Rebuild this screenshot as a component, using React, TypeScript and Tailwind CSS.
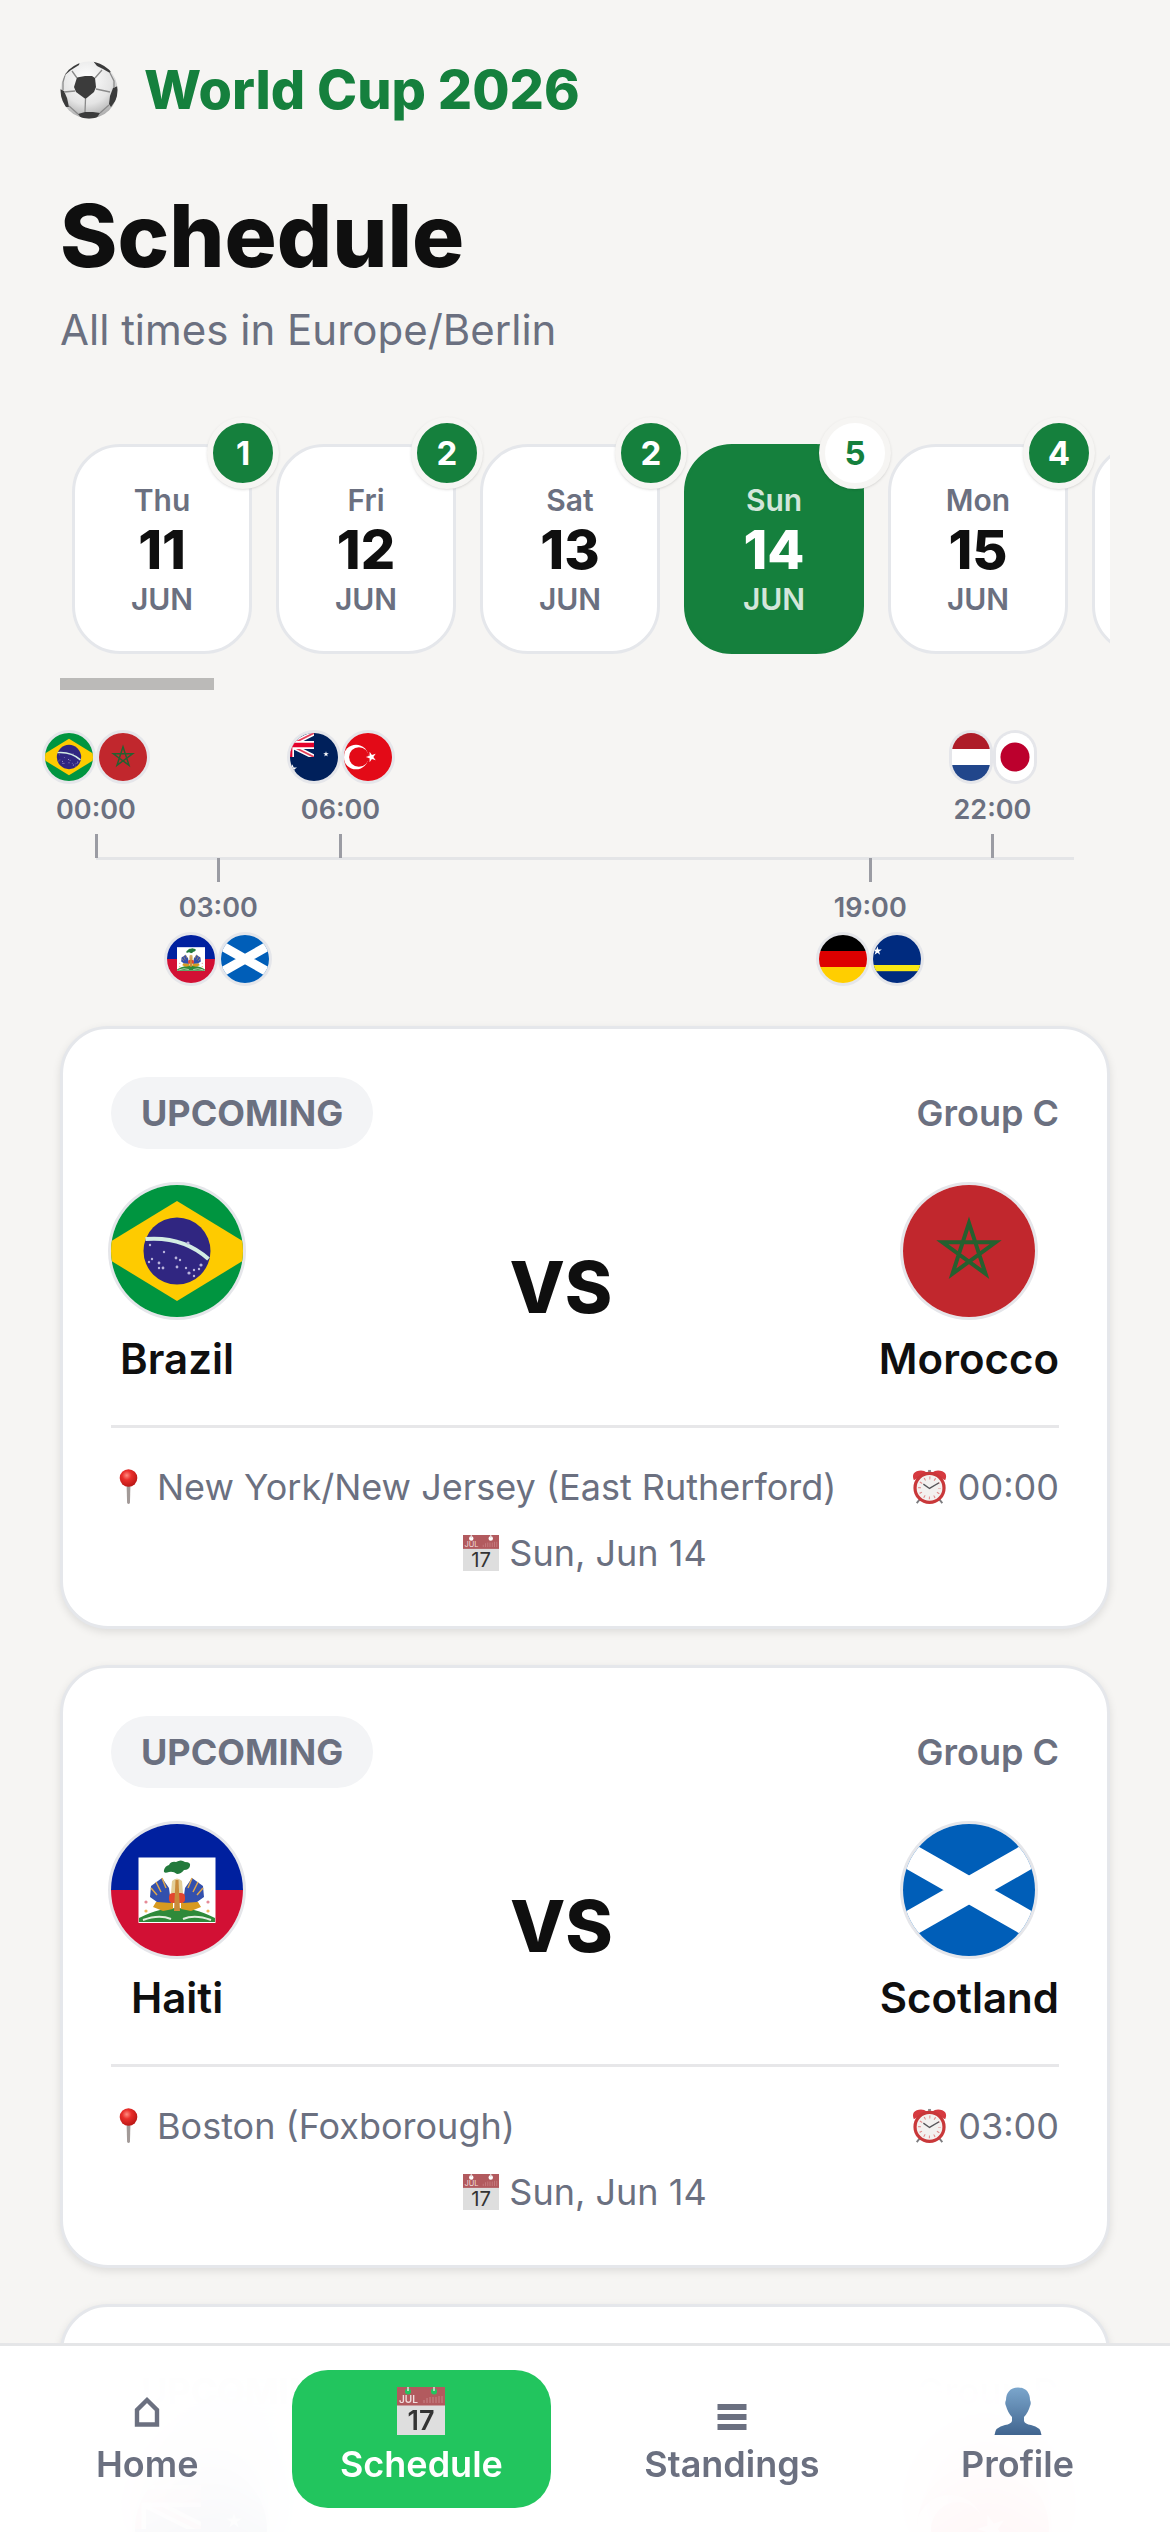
import type { ReactNode } from "react";

type Team =
  | "Brazil"
  | "Morocco"
  | "Haiti"
  | "Scotland"
  | "Australia"
  | "Türkiye"
  | "Germany"
  | "Curaçao"
  | "Netherlands"
  | "Japan";

const STAR =
  "M0-1 .2245-.309 .9511-.309 .3633.118 .5878.809 0 .382-.5878.809-.3633.118-.9511-.309-.2245-.309Z";

function Star({ x, y, r }: { x: number; y: number; r: number }) {
  return <path d={STAR} fill="#fff" transform={`translate(${x} ${y}) scale(${r})`} />;
}

function Stripes({ colors }: { colors: [string, string, string] }) {
  return (
    <>
      {colors.map((c, i) => (
        <rect key={i} x="-66" y={-66 + i * 44} width="132" height="44" fill={c} />
      ))}
    </>
  );
}

/* Flag art is drawn on a 132-unit square centred on the origin. */
const FLAGS: Record<Team, ReactNode> = {
  Brazil: (
    <>
      <rect x="-66" y="-66" width="132" height="132" fill="#009540" />
      <path d="M-82 0 0-50 82 0 0 50Z" fill="#fecb00" />
      <circle r="33.5" fill="#302681" />
      <path d="M-31.5-12Q6-15 31.5 8" fill="none" stroke="#d3ece4" strokeWidth="4" />
      <g fill="#b9b4dc">
        <circle cx="-27" cy="-6" r="1.2" />
        <circle cx="-13" cy="1" r="1.2" />
        <circle cx="-28" cy="11" r="1.2" />
        <circle cx="-25" cy="8" r="1.2" />
        <circle cx="-18" cy="12" r="1.4" />
        <circle cx="-14" cy="17" r="1.4" />
        <circle cx="-18" cy="17" r="1.2" />
        <circle cx="-1" cy="7" r="1.4" />
        <circle cx="3" cy="9" r="1.2" />
        <circle cx="0" cy="16" r="1.4" />
        <circle cx="9" cy="17" r="1.2" />
        <circle cx="12" cy="22" r="1.6" />
        <circle cx="17" cy="19" r="1.2" />
        <circle cx="17" cy="25" r="1.2" />
        <circle cx="24" cy="14" r="1.6" />
        <circle cx="22" cy="18" r="1.2" />
        <circle cx="11" cy="-8" r="1.6" />
      </g>
    </>
  ),
  Morocco: (
    <>
      <rect x="-66" y="-66" width="132" height="132" fill="#c1272d" />
      <path
        d="M0-28 16.5 22.7-26.6-8.7H26.6L-16.5 22.7Z"
        fill="none"
        stroke="#25602f"
        strokeWidth="4"
      />
    </>
  ),
  Haiti: (
    <>
      <rect x="-66" y="-66" width="132" height="66" fill="#00209f" />
      <rect x="-66" width="132" height="66" fill="#d21034" />
      <rect x="-38.5" y="-32.5" width="77" height="65.5" fill="#fff" />
      <path d="M-38 32V28Q-26 22-17 20 0 16 17 20 26 22 38 28V32Z" fill="#2f8a3a" />
      <path d="M-34 30Q-18 24-6 29M34 30Q18 24 6 29" fill="none" stroke="#e4efe0" strokeWidth="2" />
      <path d="M-21 12-24 17-14 21-4 19V12ZM21 12 24 17 14 21 4 19V12Z" fill="#d79a20" />
      <path
        d="M-15-12-26-4-27 7-20 12-6 13-8-2ZM15-12 26-4 27 7 20 12 6 13 8-2Z"
        fill="#3350ad"
      />
      <path
        d="M-15-12-11-2M-21-8-16 2M-26-2-20 5M15-12 11-2M21-8 16 2M26-2 20 5"
        stroke="#e0a74c"
        strokeWidth="1.5"
        fill="none"
      />
      <path d="M-5-9Q0-14 5-9L6 3H-6Z" fill="#e3cf9a" />
      <rect x="-8" y="3" width="16" height="10" rx="4" fill="#e2452f" />
      <path d="M-1.5-10H1.5L3 21H-3Z" fill="#c98b3a" />
      <path
        d="M0-16Q-4-19-8-18-14-16-13-20-12-24-8-25-6-29-1-28 4-31 8-28 14-28 13-24 12-20 7-20 4-16 0-16Z"
        fill="#237a3c"
      />
      <circle cx="-31" cy="12" r="1.6" fill="#e58a97" />
      <circle cx="31" cy="12" r="1.6" fill="#e58a97" />
      <circle cx="-31" cy="21" r="1.6" fill="#f0b458" />
      <circle cx="31" cy="21" r="1.6" fill="#f0b458" />
    </>
  ),
  Scotland: (
    <>
      <rect x="-66" y="-66" width="132" height="132" fill="#005eb8" />
      <path d="M-100-57 100 57M-100 57 100-57" stroke="#fff" strokeWidth="25.5" />
    </>
  ),
  Australia: (
    <>
      <rect x="-66" y="-66" width="132" height="132" fill="#00205b" />
      <svg x="-132" y="-66" width="132" height="66" viewBox="0 0 132 66">
        <path d="M0 0 132 66M132 0 0 66" stroke="#fff" strokeWidth="13" />
        <path d="M0 0 132 66M132 0 0 66" stroke="#e4405a" strokeWidth="5" />
        <path d="M66 0V66M0 33H132" stroke="#fff" strokeWidth="22" />
        <path d="M66 0V66M0 33H132" stroke="#e4002b" strokeWidth="13" />
      </svg>
      <Star x={33} y={-8} r={8} />
      <Star x={-59} y={33} r={13} />
    </>
  ),
  Türkiye: (
    <>
      <rect x="-66" y="-66" width="132" height="132" fill="#e30a17" />
      <circle cx="-33" r="34" fill="#fff" />
      <circle cx="-25" r="27" fill="#e30a17" />
      <g transform="rotate(-90 9 0)">
        <Star x={9} y={0} r={15} />
      </g>
    </>
  ),
  Germany: <Stripes colors={["#000000", "#dd0000", "#ffce00"]} />,
  Netherlands: <Stripes colors={["#ae1c28", "#ffffff", "#21468b"]} />,
  Japan: (
    <>
      <rect x="-66" y="-66" width="132" height="132" fill="#fff" />
      <circle r="40" fill="#bc002d" />
    </>
  ),
  Curaçao: (
    <>
      <rect x="-66" y="-66" width="132" height="132" fill="#002b7f" />
      <rect x="-66" y="16.5" width="132" height="17" fill="#f9e814" />
      <Star x={-54} y={-22} r={13} />
    </>
  ),
};

function Flag({ team, className }: { team: Team; className: string }) {
  return (
    <svg
      role="img"
      aria-label={`${team} flag`}
      viewBox="-66 -66 132 132"
      preserveAspectRatio="xMidYMid slice"
      className={`shrink-0 rounded-full ring-3 ring-[#e5e6ea] ${className}`}
    >
      {FLAGS[team]}
    </svg>
  );
}

function SoccerBall() {
  return (
    <svg viewBox="0 0 58 58" className="size-[58px]" aria-hidden="true">
      <defs>
        <radialGradient id="ball" cx=".45" cy=".3" r=".75">
          <stop offset="0" stopColor="#ffffff" />
          <stop offset=".6" stopColor="#e4e4e4" />
          <stop offset="1" stopColor="#a2a2a2" />
        </radialGradient>
        <clipPath id="ballClip">
          <circle cx="29" cy="29" r="28.5" />
        </clipPath>
      </defs>
      <circle cx="29" cy="29" r="28.5" fill="url(#ball)" />
      <g clipPath="url(#ballClip)">
        <g fill="#3b3b3b">
          <path d="M17 16.5 25 15H32L35 17 36 26 34 31 25.5 38 16 31 14 26Z" />
          <path d="M33 0 41 1 51 10 50 12 43 8 37 5Z" />
          <path d="M20 0 19 4 11 9 5 14 3 12 10 3Z" />
          <path d="M0 28 4 30 7 37 9 46 5 46-1 36Z" />
          <path d="M58 25 53 27 50 35 49 43 51 46 58 36Z" />
          <path d="M18 53 25 51 33 51 40 52 36 58H22Z" />
        </g>
        <g fill="none" stroke="#8a8a8a" strokeWidth="1.3">
          <path d="M17 17 12 10M35 17 42 9M36 28 50 31M25.5 38 25 51M15 30 4 31M9 45 18 53M40 52 49 44M50 12 54 20 54 27M5 14 3 21 3 29" />
        </g>
      </g>
    </svg>
  );
}

function Pin() {
  return (
    <svg viewBox="0 0 38 38" className="size-9 shrink-0" aria-hidden="true">
      <defs>
        <radialGradient id="pin" cx=".4" cy=".35" r=".65">
          <stop offset="0" stopColor="#ff8c80" />
          <stop offset=".4" stopColor="#ea2f2b" />
          <stop offset="1" stopColor="#bb1715" />
        </radialGradient>
      </defs>
      <path d="M16.5 18H20.5L20 36Q18.5 38 17 36Z" fill="#a29a98" />
      <circle cx="18.5" cy="9.5" r="9.3" fill="url(#pin)" />
    </svg>
  );
}

function Clock() {
  return (
    <svg viewBox="0 0 38 38" className="size-9 shrink-0" aria-hidden="true">
      <path d="M9 31 5 36M28 31 32 36" stroke="#7d7d80" strokeWidth="2" />
      <path d="M2 12Q-1 5 5 2.500 11 0 16 4ZM35 12Q38 5 32 2.500 26 0 21 4Z" fill="#d63a40" />
      <rect x="17" y="1" width="3" height="4" fill="#8b8b8e" />
      <circle cx="18.5" cy="20" r="15.3" fill="#f3f1ef" stroke="#c9383a" strokeWidth="3.4" />
      <circle
        cx="18.5"
        cy="20"
        r="10.5"
        fill="none"
        stroke="#e08a8a"
        strokeWidth="3"
        strokeDasharray="1.1 4.398"
        strokeDashoffset=".5"
      />
      <path d="M12 16 18.5 20.5 28.5 14.5" fill="none" stroke="#55565a" strokeWidth="1.4" />
    </svg>
  );
}

function Calendar({ className }: { className: string }) {
  return (
    <svg viewBox="0 0 48 48" className={`shrink-0 ${className}`} aria-hidden="true">
      <path
        fillRule="evenodd"
        d="M0 0H48V19H0ZM11 1.500A3 3 0 1 0 11 7.500 3 3 0 1 0 11 1.500ZM37 1.500A3 3 0 1 0 37 7.500 3 3 0 1 0 37 1.500Z"
        fill="#b25a5e"
      />
      <rect y="18.500" width="48" height="29.500" fill="#dedede" />
      <path d="M27 13V16M30 11V16M33 10V16M36 10V16M39 10V16M42 9V16M45 9V16" stroke="#c88387" />
      <path d="M11 4V0M37 4V0" stroke="#e6dcdc" strokeWidth="1.5" />
      <text x="2" y="16" fontSize="10" fill="#f0dcdc" fontFamily="Inter, sans-serif">
        JUL
      </text>
      <text x="24" y="43" fontSize="27" textAnchor="middle" fill="#333" fontFamily="Inter, sans-serif">
        17
      </text>
    </svg>
  );
}

function HomeIcon() {
  return (
    <svg viewBox="0 0 48 48" className="size-12" aria-hidden="true">
      <path d="M14 37.500V23L24 13 34 23V37.500Z" fill="none" stroke="currentColor" strokeWidth="4.4" />
    </svg>
  );
}

function StandingsIcon() {
  return (
    <svg viewBox="0 0 48 48" className="size-12" aria-hidden="true">
      <path d="M9.500 20H38.500M9.500 30H38.500M9.500 40H38.500" stroke="currentColor" strokeWidth="6" />
    </svg>
  );
}

function ProfileIcon() {
  return (
    <svg viewBox="0 0 48 48" className="size-12" aria-hidden="true">
      <defs>
        <linearGradient id="person" x1="0" y1="0" x2="0" y2="1">
          <stop offset="0" stopColor="#7ba6cc" />
          <stop offset="1" stopColor="#41658f" />
        </linearGradient>
      </defs>
      <path
        d="M24 0.500C32 .5 36 6 36 13Q37.500 16 36 19 34 26 30 30V34Q31 37 37 38 47 40 47.500 48H.5Q1 40 11 38 17 37 18 34V30Q14 26 12 19 10.500 16 12 13C12 6 16 .5 24 .5Z"
        fill="url(#person)"
      />
    </svg>
  );
}

const DAYS = [
  { day: "Thu", date: 11, count: 1 },
  { day: "Fri", date: 12, count: 2 },
  { day: "Sat", date: 13, count: 2 },
  { day: "Sun", date: 14, count: 5, selected: true },
  { day: "Mon", date: 15, count: 4 },
  { day: "Tue", date: 16, count: 4 },
];

function DayButton({ day, date, count, selected = false }: (typeof DAYS)[number]) {
  const muted = selected ? "text-[#d3e6da]" : "text-[#6b7080]";
  return (
    <button
      type="button"
      aria-pressed={selected}
      className={`relative flex h-[210px] w-[180px] shrink-0 flex-col items-center justify-center rounded-[48px] border-3 ${
        selected ? "border-[#15803d] bg-[#15803d] text-white" : "border-[#e5e7eb] bg-white text-[#0f0f0f]"
      }`}
    >
      <span className={`text-[30px] leading-10 font-semibold ${muted}`}>{day}</span>
      <span className="text-[54px] leading-[60px] font-extrabold">{date}</span>
      <span className={`text-[30px] leading-[38px] font-semibold ${muted}`}>JUN</span>
      <span
        className={`absolute -top-[30px] -right-[30px] flex size-[72px] items-center justify-center rounded-full border-6 border-[#f6f5f3] text-[33px] leading-9 font-bold shadow-sm ${
          selected ? "bg-white text-[#15803d]" : "bg-[#15803d] text-white"
        }`}
      >
        {count}
      </span>
    </button>
  );
}

const SLOTS: { time: string; hour: number; teams: [Team, Team]; below?: boolean; narrow?: boolean }[] = [
  { time: "00:00", hour: 0, teams: ["Brazil", "Morocco"] },
  { time: "03:00", hour: 3, teams: ["Haiti", "Scotland"], below: true },
  { time: "06:00", hour: 6, teams: ["Australia", "Türkiye"] },
  { time: "19:00", hour: 19, teams: ["Germany", "Curaçao"], below: true },
  { time: "22:00", hour: 22, teams: ["Netherlands", "Japan"], narrow: true },
];

function Timeline() {
  return (
    <div className="relative mx-9 mt-10 h-64">
      <div className="absolute inset-x-0 top-1/2 -mt-px h-[3px] bg-[#e4e5e7]" />
      {SLOTS.map((s) => (
        <div
          key={s.time}
          className={`absolute flex -translate-x-1/2 items-center ${
            s.below ? "top-1/2 flex-col-reverse" : "bottom-1/2 flex-col"
          }`}
          style={{ left: `${(s.hour / 24) * 100}%` }}
        >
          <div className="flex gap-1.5 p-[3px]">
            {s.teams.map((t) => (
              <Flag key={t} team={t} className={s.narrow ? "h-12 w-[38px]" : "size-12"} />
            ))}
          </div>
          <span className="pt-0.5 text-[27px] leading-12 font-semibold text-[#6b7080]">{s.time}</span>
          <span className="h-6 w-[3px] bg-[#9b9ca3]" />
        </div>
      ))}
    </div>
  );
}

const MATCHES: { home: Team; away: Team; group: string; venue: string; time: string; date: string }[] = [
  {
    home: "Brazil",
    away: "Morocco",
    group: "Group C",
    venue: "New York/New Jersey (East Rutherford)",
    time: "00:00",
    date: "Sun, Jun 14",
  },
  {
    home: "Haiti",
    away: "Scotland",
    group: "Group C",
    venue: "Boston (Foxborough)",
    time: "03:00",
    date: "Sun, Jun 14",
  },
  {
    home: "Australia",
    away: "Türkiye",
    group: "Group D",
    venue: "Vancouver",
    time: "06:00",
    date: "Sun, Jun 14",
  },
];

function TeamColumn({ team }: { team: Team }) {
  return (
    <div className="flex flex-col items-center gap-3">
      <Flag team={team} className="size-[132px]" />
      <span className="text-[42px] leading-[60px] font-semibold text-[#0f0f0f]">{team}</span>
    </div>
  );
}

function MatchCard({ match }: { match: (typeof MATCHES)[number] }) {
  return (
    <article className="rounded-[48px] border-3 border-[#e5e7eb] bg-white px-12 pt-12 pb-[46px] shadow-[0_3px_9px_rgba(0,0,0,0.1)]">
      <div className="flex items-center justify-between text-[36px] leading-[54px] text-[#6b7080]">
        <span className="rounded-full bg-[#f3f4f6] px-[30px] py-[9px] font-bold">UPCOMING</span>
        <span className="font-semibold">{match.group}</span>
      </div>
      <div className="mt-9 flex items-center justify-between">
        <TeamColumn team={match.home} />
        <span className="text-[72px] leading-[90px] font-extrabold text-[#0f0f0f]">VS</span>
        <TeamColumn team={match.away} />
      </div>
      <div className="mt-9 flex flex-col gap-3 border-t-3 border-[#e7e7e9] pt-8 text-[36px] leading-[54px] text-[#6b7080]">
        <div className="flex items-center justify-between">
          <span className="flex items-center gap-2.5">
            <Pin />
            {match.venue}
          </span>
          <span className="flex items-center gap-2.5">
            <Clock />
            {match.time}
          </span>
        </div>
        <div className="flex items-center justify-center gap-2.5">
          <Calendar className="size-9" />
          {match.date}
        </div>
      </div>
    </article>
  );
}

const TABS = [
  { label: "Home", icon: <HomeIcon /> },
  { label: "Schedule", icon: <Calendar className="size-12" />, active: true },
  { label: "Standings", icon: <StandingsIcon /> },
  { label: "Profile", icon: <ProfileIcon /> },
];

export default function App() {
  return (
    <div className="h-screen overflow-hidden bg-[#f6f5f3] font-['Inter',sans-serif]">
      <main className="h-full overflow-x-hidden overflow-y-auto px-[60px] pt-[60px] pb-[240px] [scrollbar-width:none]">
        <header className="flex h-[60px] items-center gap-[26px]">
          <SoccerBall />
          <span className="text-[54px] leading-[60px] font-extrabold text-[#15803d]">World Cup 2026</span>
        </header>

        <h1 className="mt-[68px] text-[87px] leading-[96px] font-extrabold text-[#0f0f0f]">Schedule</h1>
        <p className="mt-4 text-[42px] leading-[60px] text-[#6b7080]">All times in Europe/Berlin</p>

        <div className="mt-12 flex gap-6 overflow-x-auto px-3 pt-9 pb-6 [scrollbar-width:none]">
          {DAYS.map((d) => (
            <DayButton key={d.date} {...d} />
          ))}
        </div>
        <div className="h-3 w-[154px] bg-[#bbbab8]" />

        <Timeline />

        <section className="mt-10 flex flex-col gap-9">
          {MATCHES.map((m) => (
            <MatchCard key={m.home} match={m} />
          ))}
        </section>
      </main>

      <nav className="fixed inset-x-0 bottom-0 flex justify-between border-t-3 border-[#e5e6e8] bg-white/97 px-12 py-6 backdrop-blur-2xl">
        {TABS.map((t) => (
          <a
            key={t.label}
            href={`#${t.label.toLowerCase()}`}
            aria-current={t.active ? "page" : undefined}
            className={`flex flex-col items-center rounded-[36px] px-12 pt-3 pb-5 text-[36px] leading-12 font-semibold ${
              t.active ? "bg-[#22c55e] text-white" : "text-[#6b7080]"
            }`}
          >
            <span className="flex h-[58px] items-center">{t.icon}</span>
            {t.label}
          </a>
        ))}
      </nav>
    </div>
  );
}
